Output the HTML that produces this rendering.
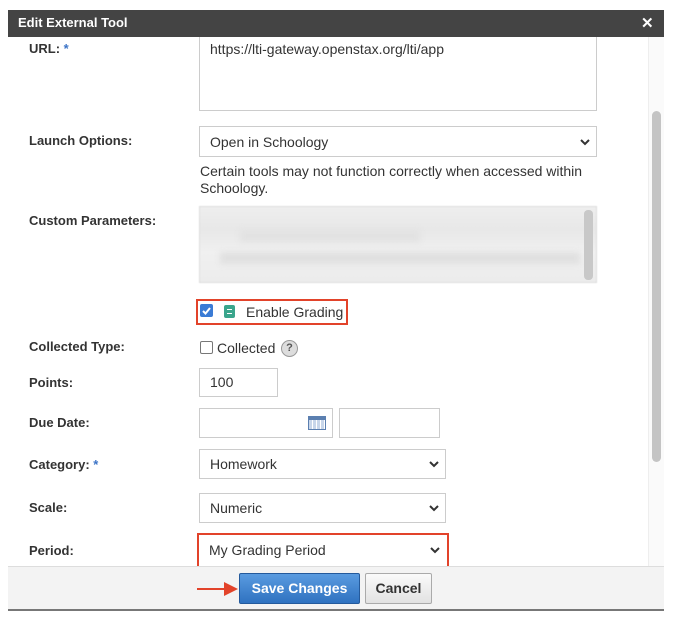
<!DOCTYPE html>
<html><head><style>
*{margin:0;padding:0;box-sizing:border-box}
body{width:673px;height:627px;background:#fff;position:relative;font-family:"Liberation Sans",Arial,sans-serif;overflow:hidden}
.a{position:absolute}
.lbl{position:absolute;left:29px;font-size:13px;font-weight:bold;color:#333}
.box{position:absolute;border:1px solid #ccc;background:#fff;font-size:14px;color:#333;padding-left:10px}
.sel{position:absolute;border:1px solid #ccc;background:#fff;font-size:14px;color:#333;padding-left:10px;display:flex;align-items:center}
.chev{position:absolute;right:6px;top:50%;margin-top:-4px}
.star{color:#3b73c6}
</style></head><body>
<div class="a" style="left:8px;top:10px;width:656px;height:27px;background:#444;"></div>
<div class="a" style="left:18px;top:15px;color:#fff;font-weight:bold;font-size:13px;">Edit External Tool</div>
<div class="a" style="left:641px;top:14px;color:#fff;font-weight:bold;font-size:15px;">✕</div>
<div class="a" style="left:8px;top:37px;width:656px;height:529px;background:#fff;"></div>
<div class="a" style="left:648px;top:37px;width:16px;height:529px;background:#fafafa;border-left:1px solid #eee"></div>
<div class="a" style="left:652px;top:111px;width:9px;height:351px;background:#c4c4c4;border-radius:5px"></div>

<div class="lbl" style="top:41px">URL: <span class="star">*</span></div>
<div class="box" style="left:199px;top:37px;width:398px;height:74px;border-top:none;padding-top:4px">https://lti-gateway.openstax.org/lti/app</div>

<div class="lbl" style="top:133px">Launch Options:</div>
<div class="sel" style="left:199px;top:126px;width:398px;height:31px">Open in Schoology<svg class="chev" width="10" height="8"><path d="M1 2l4 4 4-4" stroke="#333" stroke-width="2" fill="none"/></svg></div>
<div class="a" style="left:200px;top:163px;font-size:14px;color:#333;line-height:17px;width:400px">Certain tools may not function correctly when accessed within Schoology.</div>

<div class="lbl" style="top:213px">Custom Parameters:</div>
<div class="a" style="left:199px;top:206px;width:398px;height:77px;border:1px solid #ddd;background:linear-gradient(180deg,#eee,#e8e8e8 30%,#f0f0f0 60%,#ececec);filter:blur(0.5px)"></div>
<div class="a" style="left:240px;top:230px;width:180px;height:12px;background:#e2e2e2;filter:blur(3px)"></div>
<div class="a" style="left:220px;top:252px;width:360px;height:12px;background:#e0e0e0;filter:blur(3px)"></div>
<div class="a" style="left:584px;top:210px;width:9px;height:70px;background:#c8c8c8;border-radius:4px"></div>

<div class="a" style="left:196px;top:299px;width:152px;height:26px;border:2px solid #e2432a"></div>
<div class="a" style="left:200px;top:304px;width:13px;height:13px;background:#3a7bd5;border-radius:2px"><svg width="13" height="13"><path d="M3 7l2.5 2.5L10 4" stroke="#fff" stroke-width="2" fill="none"/></svg></div>
<div class="a" style="left:224px;top:305px;width:11px;height:13px;background:#3aa58c;border-radius:2px"><div class="a" style="left:3px;top:4px;width:5px;height:1px;background:#fff"></div><div class="a" style="left:3px;top:8px;width:5px;height:1px;background:#fff"></div></div>
<div class="a" style="left:246px;top:304px;font-size:14px;color:#333">Enable Grading</div>

<div class="lbl" style="top:339px">Collected Type:</div>
<div class="a" style="left:200px;top:341px;width:13px;height:13px;border:1px solid #777;border-radius:2px"></div>
<div class="a" style="left:217px;top:340px;font-size:14px;color:#333">Collected</div>
<div class="a" style="left:281px;top:340px;width:17px;height:17px;border-radius:50%;background:#ddd;border:1px solid #999;font-size:11px;font-weight:bold;text-align:center;line-height:15px;color:#555">?</div>

<div class="lbl" style="top:375px">Points:</div>
<div class="box" style="left:199px;top:368px;width:79px;height:29px;line-height:27px">100</div>

<div class="lbl" style="top:415px">Due Date:</div>
<div class="box" style="left:199px;top:408px;width:134px;height:30px"></div>
<div class="a" style="left:308px;top:416px;width:18px;height:14px;border:1px solid #5b7fb0;background:repeating-linear-gradient(90deg,#c8d6ea 0 3px,#fff 3px 4px)"><div style="height:3px;background:#5b7fb0"></div></div>
<div class="box" style="left:339px;top:408px;width:101px;height:30px"></div>

<div class="lbl" style="top:457px">Category: <span class="star">*</span></div>
<div class="sel" style="left:199px;top:449px;width:247px;height:30px">Homework<svg class="chev" width="10" height="8"><path d="M1 2l4 4 4-4" stroke="#333" stroke-width="2" fill="none"/></svg></div>

<div class="lbl" style="top:500px">Scale:</div>
<div class="sel" style="left:199px;top:493px;width:247px;height:30px">Numeric<svg class="chev" width="10" height="8"><path d="M1 2l4 4 4-4" stroke="#333" stroke-width="2" fill="none"/></svg></div>

<div class="lbl" style="top:543px">Period:</div>
<div class="a" style="left:197px;top:533px;width:252px;height:35px;border:2px solid #e2432a"></div>
<div class="sel" style="left:199px;top:535px;width:247px;height:30px;border:none">My Grading Period<svg class="chev" width="10" height="8"><path d="M1 2l4 4 4-4" stroke="#333" stroke-width="2" fill="none"/></svg></div>

<div class="a" style="left:8px;top:566px;width:656px;height:44px;background:#f3f3f3;border-top:1px solid #ddd"></div>
<div class="a" style="left:8px;top:609px;width:656px;height:2px;background:#777"></div>
<div class="a" style="left:197px;top:588px;width:30px;height:2px;background:#e2432a"></div>
<svg class="a" style="left:224px;top:582px" width="14" height="14"><path d="M0 0L14 7L0 14Z" fill="#e2432a"/></svg>
<div class="a" style="left:239px;top:573px;width:121px;height:31px;background:linear-gradient(#5a9be0,#2f72c0);border:1px solid #245a9c;border-radius:2px;color:#fff;font-weight:bold;font-size:14px;text-align:center;line-height:29px">Save Changes</div>
<div class="a" style="left:365px;top:573px;width:67px;height:31px;background:linear-gradient(#fafafa,#e2e2e2);border:1px solid #aaa;border-radius:2px;color:#333;font-weight:bold;font-size:14px;text-align:center;line-height:29px">Cancel</div>
</body></html>
